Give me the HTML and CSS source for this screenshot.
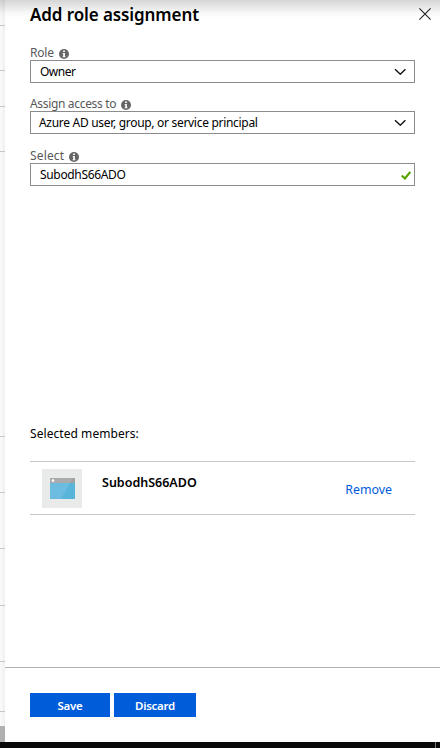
FILE: index.html
```html
<!DOCTYPE html>
<html lang="en">
<head>
<meta charset="utf-8">
<title>Add role assignment</title>
<link rel="stylesheet" href="styles.css">
</head>
<body>
<svg class="symbols" width="0" height="0" aria-hidden="true">
  <symbol id="info" viewBox="0 0 10 10"><circle cx="5" cy="5" r="5" fill="#666"/><path d="M4.100 1.500h1.800v1.500H4.100zM3.600 3.900h2.300v3.500h.7v.9H3.500v-.9h.7V4.800h-.6z" fill="#fff"/></symbol>
  <symbol id="chevron" viewBox="0 0 12 7"><path d="M1 1.200 6.300 6.200 11.400 1.200" fill="none" stroke="#111" stroke-width="1.4"/></symbol>
</svg>
<div class="window">
  <div class="main">
    <aside class="behind">
      <i class="r26"></i><i class="r45"></i><i class="r36"></i><i class="r45"></i><i class="r285"></i><i class="r56"></i><i class="r56"></i><i class="r57"></i><i class="r56"></i><i class="r50"></i>
      <b></b>
    </aside>
    <section class="panel">
      <header class="header">
        <h1><span>Add role assignment</span></h1>
        <svg class="close" viewBox="0 0 12 12"><path d="M.4.4 11.6 11.6M11.6.4.4 11.6" stroke="#222" stroke-width="1.1"/></svg>
      </header>
      <form class="form">
        <div class="field">
          <label><span class="t-role">Role</span><svg class="info"><use href="#info"/></svg></label>
          <div class="box"><span class="t-owner">Owner</span><svg class="chevron"><use href="#chevron"/></svg></div>
        </div>
        <div class="field">
          <label><span class="t-assign">Assign access to</span><svg class="info"><use href="#info"/></svg></label>
          <div class="box"><span class="t-azure">Azure AD user, group, or service principal</span><svg class="chevron"><use href="#chevron"/></svg></div>
        </div>
        <div class="field">
          <label><span class="t-select">Select</span><svg class="info"><use href="#info"/></svg></label>
          <div class="box"><span class="t-input">SubodhS66ADO</span><svg class="check" viewBox="0 0 10 9"><path d="M.7 4.500 3.900 7.500 9.300.9" fill="none" stroke="#57a300" stroke-width="2.200"/></svg></div>
        </div>
      </form>
      <div class="members">
        <h2><span>Selected members:</span></h2>
        <div class="member">
          <div class="avatar">
            <svg viewBox="0 0 25 21"><rect width="25" height="21" rx=".7" fill="#59b4d9"/><path d="M0 5h20L11 21H.7A.7.7 0 0 1 0 20.300z" fill="#6bbcde"/><path d="M0 5V.7A.7.7 0 0 1 .7 0h23.600a.7.7 0 0 1 .7.7V5z" fill="#a0a1a2"/><path d="M0 5V.7A.7.7 0 0 1 .7 0H23l-3 5z" fill="#aaabac"/><circle cx="3" cy="2.600" r="1.300" fill="#fff"/></svg>
          </div>
          <strong><span>SubodhS66ADO</span></strong>
          <a><span>Remove</span></a>
        </div>
      </div>
      <footer class="footer">
        <button class="save"><span>Save</span></button>
        <button class="discard"><span>Discard</span></button>
      </footer>
    </section>
  </div>
  <div class="taskbar"><i></i></div>
</div>
</body>
</html>
```

FILE: styles.css
```css
* { box-sizing: border-box; }
body { margin: 0; font-family: "Noto Sans", "Open Sans", sans-serif; font-size: 12px; color: #000; background: #fff; }
.symbols { position: absolute; }
span { white-space: nowrap; }
svg { display: block; flex: none; }
.window { position: relative; width: 440px; height: 748px; display: flex; flex-direction: column; overflow: hidden; }
.window::before { content: ""; position: absolute; inset: 0 0 auto; height: 18px; background: linear-gradient(rgba(0,0,0,.16), rgba(0,0,0,.13) 20%, rgba(0,0,0,.03) 70%, transparent); }
.main { height: 742px; display: flex; }
.behind { width: 5px; display: flex; flex-direction: column; background: linear-gradient(90deg, #fafafa, #f0f0f0); }
.behind i { border-bottom: 1px solid #c8c8c8; flex: none; }
.behind b { margin-top: 14px; flex: 1; background: #b0b0b0; }
.r26 { height: 26px; }
.r36 { height: 36px; }
.r45 { height: 45px; }
.r50 { height: 50px; }
.r56 { height: 56px; }
.r57 { height: 57px; }
.r285 { height: 285px; }
.panel { width: 435px; display: flex; flex-direction: column; background: #fff; }
.header { height: 45px; padding: 3px 9px 0 25px; display: flex; justify-content: space-between; }
h1 { margin: 0; font-size: 17px; line-height: 24px; font-weight: 600; letter-spacing: -.1px; }
.close { width: 12px; height: 12px; margin-top: 5px; }
.form { height: 380px; padding: 0 25px; }
.field { height: 51px; }
.field:nth-child(2) { height: 52px; }
label { height: 15px; display: flex; align-items: flex-start; line-height: 16px; color: #595959; }
label span { flex: none; }
.t-role { width: 28.5px; letter-spacing: -.2px; }
.t-assign { width: 91px; letter-spacing: -.33px; }
.t-select { width: 39px; letter-spacing: .15px; }
.info { width: 10px; height: 10px; margin-top: 4px; }
.box { height: 23px; border: 1px solid #8c8c8c; padding: 0 8px 0 9px; display: flex; align-items: center; justify-content: space-between; line-height: 21px; }
.t-owner { letter-spacing: -.5px; }
.t-azure { margin-left: -1px; letter-spacing: -.3px; }
.t-input { letter-spacing: -.33px; }
.chevron { width: 12px; height: 7px; }
.check { width: 10px; height: 9px; margin-right: -5px; margin-top: 2px; }
.members { height: 242px; padding: 0 25px; }
h2 { margin: 0; height: 36px; font-size: 12px; line-height: 17px; font-weight: 400; letter-spacing: .06px; }
.member { height: 54px; border: solid #c8c8c8; border-width: 1px 0; display: flex; padding: 7px 23px 0 12px; }
.avatar { width: 40px; height: 39px; background: #e9ebeb; display: grid; place-items: center; }
.avatar svg { width: 25px; height: 21px; }
strong { margin-left: 20px; font-size: 12.5px; font-weight: 600; line-height: 27px; }
a { margin-left: auto; font-size: 12.4px; line-height: 41px; color: #015cda; }
.footer { height: 75px; border-top: 1px solid #b2b2b2; padding: 25px 25px 0; display: flex; gap: 4px; }
button { height: 24px; padding: 1px 0 0; border: 0; background: #015cda; color: #fff; font: 600 11.5px/23px "Noto Sans", "Open Sans", sans-serif; letter-spacing: -.25px; }
.save { width: 80px; }
.discard { width: 82px; }
.taskbar { height: 6px; background: #080808; display: flex; justify-content: flex-end; padding-right: 4px; }
.taskbar i { width: 1px; background: #777; }
```
